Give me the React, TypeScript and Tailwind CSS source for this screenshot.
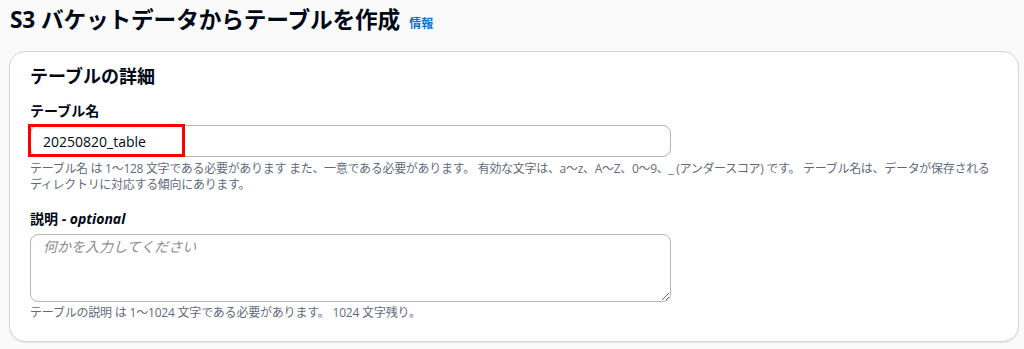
import React from "react";

export default function App() {
  const font = { fontFamily: '"Open Sans", "Noto Sans CJK JP", sans-serif' };
  return (
    <div
      className="min-h-[349px] w-[1024px] bg-[#fafafa] pl-[9px] pr-[5px] pt-[5px] text-[#000716]"
      style={font}
    >
      <div className="flex h-[30px] items-baseline pl-[1px]">
        <h1 className="text-[22.7px] font-bold leading-[30px] tracking-[-0.15px]">
          S3 バケットデータからテーブルを作成
        </h1>
        <span className="ml-[9px] text-[12px] font-bold leading-[30px] text-[#0972d3]">情報</span>
      </div>

      <div className="mt-[16px] rounded-[16px] border border-[#d5d5d8] bg-white px-[20px] pb-[20px] pt-[12px] shadow-[0_1px_1px_rgba(0,7,22,0.08)]">
        <h2 className="text-[18px] font-bold leading-[24px]">テーブルの詳細</h2>

        <div className="mt-[13px]">
          <label className="block text-[14px] font-bold leading-[20px]">テーブル名</label>
          <div className="relative mt-[4px] w-[641px]">
            <input
              readOnly
              value="20250820_table"
              className="block h-[32px] w-full rounded-[8px] border border-[#b4b4bb] bg-white px-[12px] text-[14px] text-[#000716] outline-none"
              style={font}
            />
            <div className="pointer-events-none absolute left-[-2px] top-[-1px] h-[33px] w-[157px] border-[3px] border-[#ff0000]" />
          </div>
          <p className="mt-[4px] text-[12px] leading-[16px] tracking-[-0.3px] text-[#5f6b7a]">
            テーブル名 は 1〜128 文字である必要があります また、一意である必要があります。 有効な文字は、a〜z、A〜Z、0〜9、_ (アンダースコア) です。 テーブル名は、データが保存される
            <br />
            ディレクトリに対応する傾向にあります。
          </p>
        </div>

        <div className="mt-[16px]">
          <label className="block text-[14px] font-bold leading-[20px]">
            説明 - <i>optional</i>
          </label>
          <textarea
            placeholder="何かを入力してください"
            className="mt-[5px] block h-[68px] w-[641px] rounded-[8px] border border-[#b4b4bb] bg-white px-[12px] py-[2px] text-[14px] leading-[20px] placeholder:italic placeholder:text-[#8c8c94] outline-none"
            style={font}
          />
          <p className="mt-[3px] text-[12px] leading-[16px] tracking-[-0.2px] text-[#5f6b7a]">
            テーブルの説明 は 1〜1024 文字である必要があります。 1024 文字残り。
          </p>
        </div>
      </div>
    </div>
  );
}
